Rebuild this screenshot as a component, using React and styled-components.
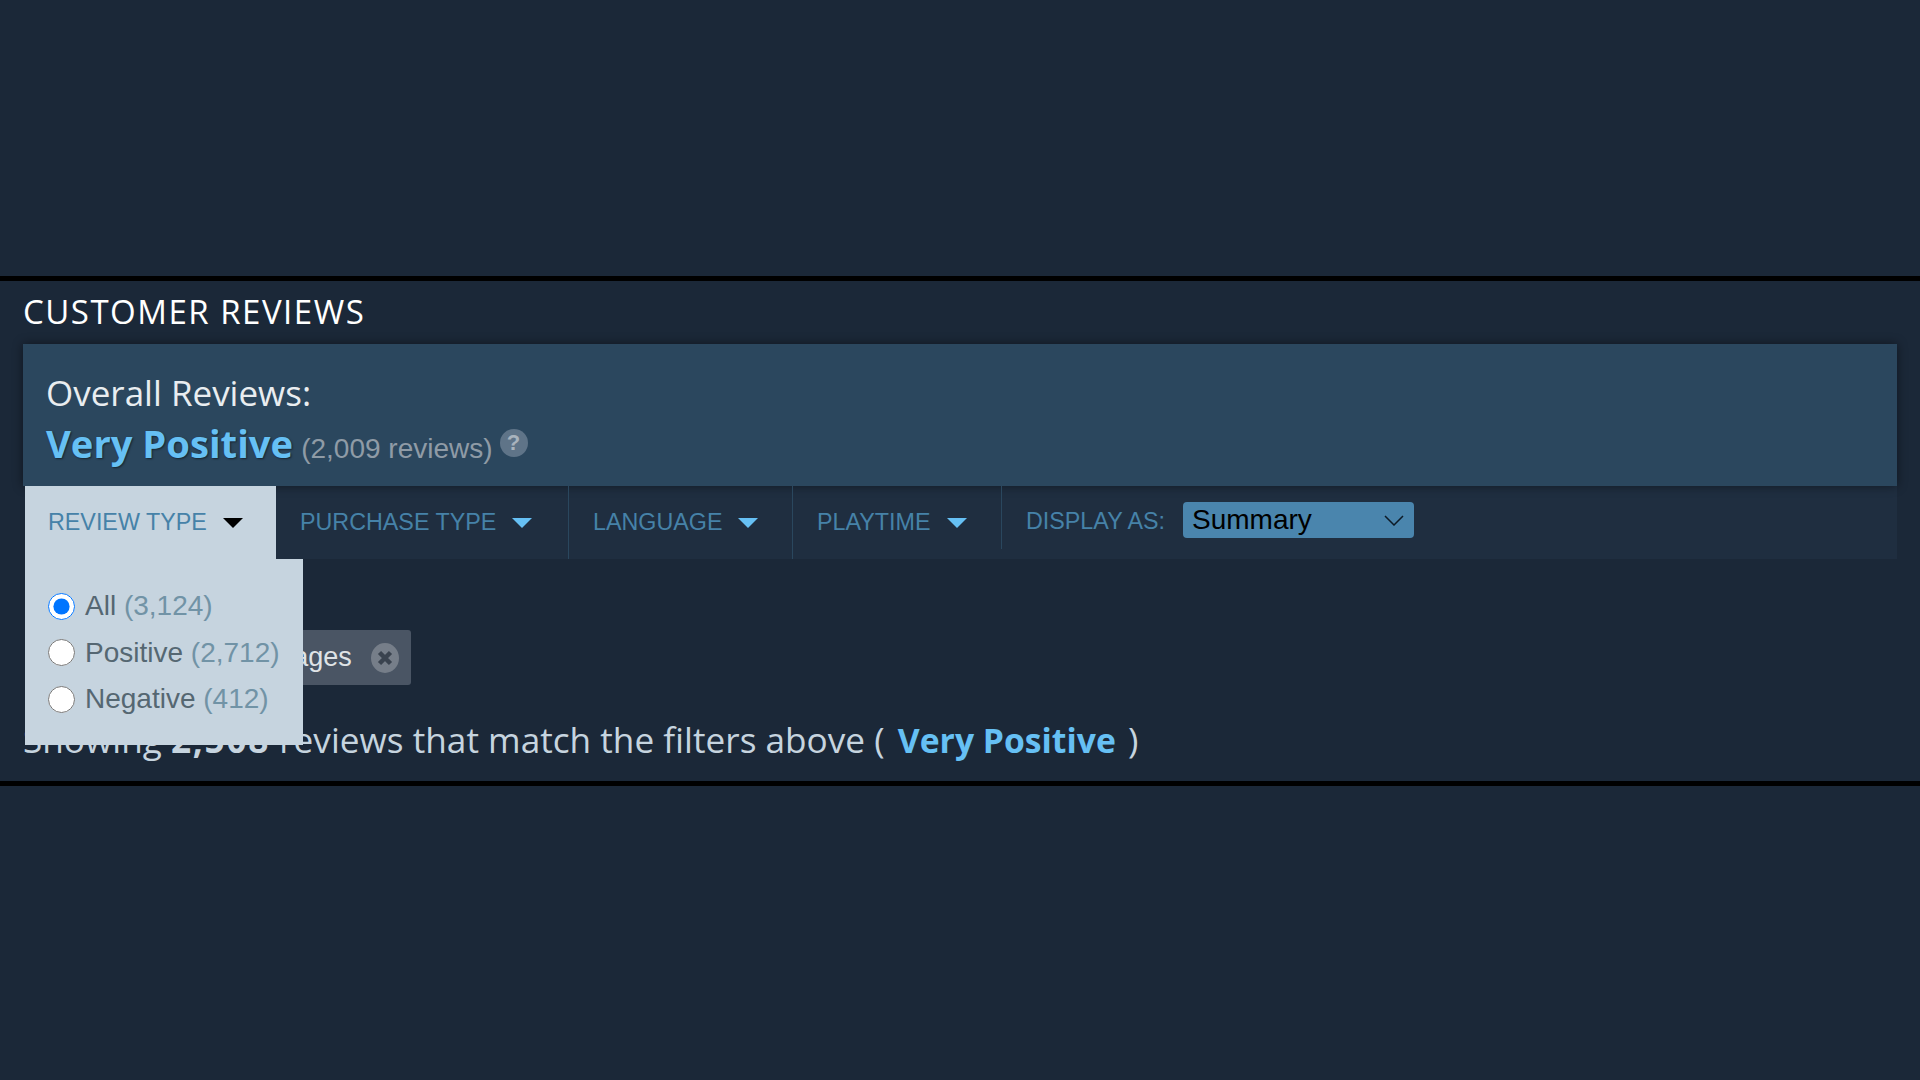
import React from "react";
import styled, { createGlobalStyle } from "styled-components";

const GlobalStyle = createGlobalStyle`
  html, body {
    margin: 0;
    padding: 0;
    background: #1b2838;
  }
  body {
    width: 1920px;
    height: 1080px;
    overflow: hidden;
    font-family: "Liberation Sans", Arial, sans-serif;
  }
`;

const Page = styled.div`
  padding-top: 276px;
`;

const Section = styled.section`
  position: relative;
  box-sizing: border-box;
  height: 510px;
  border-top: 5px solid #000;
  border-bottom: 5px solid #000;
  padding: 0 23px;
`;

const Title = styled.h2`
  margin: 0;
  height: 63px;
  font-family: "Open Sans", sans-serif;
  font-weight: 400;
  font-size: 33px;
  letter-spacing: 1.5px;
  line-height: 62px;
  color: #fff;
`;

const Summary = styled.div`
  position: relative;
  box-sizing: border-box;
  height: 142px;
  padding: 26px 0 0 23px;
  background: #2b475e;
  box-shadow: 0 0 10px rgba(0, 0, 0, 0.45);
`;

const OverallLabel = styled.div`
  font-family: "Open Sans", sans-serif;
  font-size: 35px;
  line-height: 46px;
  color: #e9edf0;
`;

const ScoreRow = styled.div`
  display: flex;
  align-items: baseline;
  margin-top: 1px;
`;

const Score = styled.span`
  font-family: "Open Sans", sans-serif;
  font-weight: 700;
  font-size: 38.2px;
  line-height: 52px;
  color: #66c0f4;
  text-shadow: 1px 1px 2px rgba(0, 0, 0, 0.5);
`;

const ReviewCount = styled.span`
  margin-left: 8px;
  font-size: 28px;
  color: #8f9ba6;
`;

const Help = styled.span`
  display: flex;
  align-items: center;
  justify-content: center;
  align-self: flex-start;
  width: 28px;
  height: 28px;
  margin: 12px 0 0 7px;
  border-radius: 50%;
  background: #5f7488;
  color: #a8b3bd;
  font-weight: 700;
  font-size: 22px;
`;

const FilterBar = styled.div`
  display: flex;
  height: 73px;
  margin-left: 2px;
  background: #1f2e40;
`;

const Tab = styled.div`
  position: relative;
  display: flex;
  align-items: center;
  box-sizing: border-box;
  width: ${(props) => props.width}px;
  padding-left: ${(props) => (props.open ? 23 : 24)}px;
  font-size: 23.3px;
  color: #4682a8;
  background: ${(props) => (props.open ? "#c6d4df" : "transparent")};
  z-index: ${(props) => (props.open ? 2 : 0)};

  &::after {
    content: "";
    position: absolute;
    top: 0;
    right: 0;
    bottom: ${(props) => (props.short ? 10 : 0)}px;
    width: 1px;
    background: ${(props) => (props.open ? "transparent" : "#2a475e")};
  }
`;

const Caret = styled.span`
  width: 0;
  height: 0;
  margin-left: 16px;
  border-left: 10px solid transparent;
  border-right: 10px solid transparent;
  border-top: 10px solid ${(props) => (props.open ? "#000" : "#66c0f4")};
`;

const DisplayGroup = styled.div`
  display: flex;
  align-items: flex-start;
  padding: 16px 0 0 24px;
`;

const DisplayLabel = styled.span`
  margin-top: 1px;
  font-size: 23.3px;
  line-height: 37px;
  color: #4682a8;
`;

const Select = styled.div`
  display: flex;
  align-items: center;
  justify-content: space-between;
  box-sizing: border-box;
  width: 231px;
  height: 36px;
  margin-left: 18px;
  padding: 0 10px 0 9px;
  border-radius: 4px;
  background: #4a85ad;
  color: #000;
  font-size: 28px;
`;

const TagRow = styled.div`
  display: flex;
  justify-content: flex-start;
  margin-top: 71px;
  padding-left: 113px;
`;

const Tag = styled.div`
  display: flex;
  align-items: center;
  box-sizing: border-box;
  height: 55px;
  padding: 0 12px 0 20px;
  border-radius: 3px;
  background: #4a5564;
  color: #dfe3e6;
  font-size: 27px;
`;

const TagClose = styled.svg`
  width: 28px;
  height: 30px;
  margin-left: 19px;
`;

const ResultLine = styled.div`
  margin-top: 30px;
  font-family: "Open Sans", sans-serif;
  font-size: 35.2px;
  line-height: 48px;
  color: #c6d4df;
`;

const Count = styled.b`
  font-weight: 700;
  letter-spacing: 1.7px;
`;

const ResultScore = styled.b`
  margin: 0 3px 0 4px;
  font-weight: 700;
  font-size: 33.7px;
  color: #66c0f4;
`;

const Dropdown = styled.div`
  position: absolute;
  left: 25px;
  top: 278px;
  box-sizing: border-box;
  width: 278px;
  height: 186px;
  padding-top: 24px;
  background: #c6d4df;
  z-index: 2;
`;

const Option = styled.label`
  display: flex;
  align-items: center;
  gap: 10px;
  height: 46.5px;
  padding-left: 23px;
  font-size: 28px;
  color: #556772;
`;

const Radio = styled.input`
  width: 27px;
  height: 27px;
  margin: 0;
  accent-color: #0075ff;
`;

const OptionCount = styled.span`
  color: #7193a6;
`;

const options = [
  { label: "All", count: "(3,124)", checked: true },
  { label: "Positive", count: "(2,712)" },
  { label: "Negative", count: "(412)" },
];

const tabs = [
  { label: "PURCHASE TYPE", width: 293 },
  { label: "LANGUAGE", width: 224 },
  { label: "PLAYTIME", width: 209, short: true },
];

export default function App() {
  return (
    <Page>
      <GlobalStyle />
      <Section>
        <Title>CUSTOMER REVIEWS</Title>
        <Summary>
          <OverallLabel>Overall Reviews:</OverallLabel>
          <ScoreRow>
            <Score>Very Positive</Score>
            <ReviewCount>(2,009 reviews)</ReviewCount>
            <Help>?</Help>
          </ScoreRow>
        </Summary>
        <FilterBar>
          <Tab open width={251}>
            REVIEW TYPE
            <Caret open />
          </Tab>
          {tabs.map((tab) => (
            <Tab key={tab.label} width={tab.width} short={tab.short}>
              {tab.label}
              <Caret />
            </Tab>
          ))}
          <DisplayGroup>
            <DisplayLabel>DISPLAY AS:</DisplayLabel>
            <Select>
              Summary
              <svg width="20" height="11" viewBox="0 0 20 11" fill="none">
                <path d="M1 1l9 9 9-9" stroke="#0d1a26" strokeWidth="1.5" />
              </svg>
            </Select>
          </DisplayGroup>
        </FilterBar>
        <TagRow>
          <Tag>
            Your Languages
            <TagClose viewBox="0 0 28 30">
              <ellipse cx="14" cy="15" rx="14" ry="15" fill="#767e89" />
              <path d="M8.5 9.5l11 11M19.5 9.5l-11 11" stroke="#3a434f" strokeWidth="4.5" />
            </TagClose>
          </Tag>
        </TagRow>
        <ResultLine>
          Showing <Count>2,508</Count> reviews that match the filters above ({" "}
          <ResultScore>Very Positive</ResultScore> )
        </ResultLine>
        <Dropdown>
          {options.map((option) => (
            <Option key={option.label}>
              <Radio type="radio" name="review-type" defaultChecked={option.checked} />
              <span>
                {option.label} <OptionCount>{option.count}</OptionCount>
              </span>
            </Option>
          ))}
        </Dropdown>
      </Section>
    </Page>
  );
}
